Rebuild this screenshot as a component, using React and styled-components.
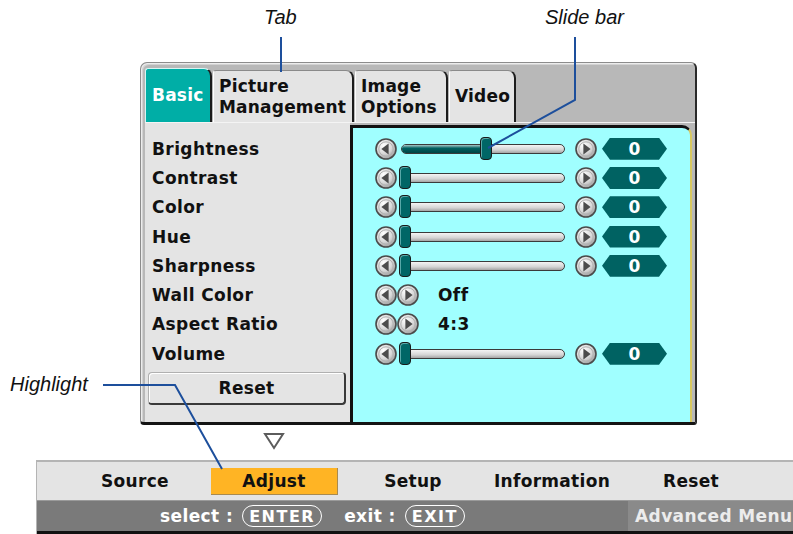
import React from "react";
import styled, { createGlobalStyle } from "styled-components";

const GlobalStyle = createGlobalStyle`
  html, body {
    margin: 0;
    padding: 0;
    background: #ffffff;
  }
  body {
    font-family: "DejaVu Sans", "Liberation Sans", sans-serif;
  }
`;

const tabs = [
  { id: "basic", label: "Basic", width: 67 },
  { id: "picture", label: "Picture\nManagement", width: 141 },
  { id: "image", label: "Image\nOptions", width: 93 },
  { id: "video", label: "Video", width: 67 },
];

const rows = [
  { label: "Brightness", type: "slider", value: 50 },
  { label: "Contrast", type: "slider", value: 0 },
  { label: "Color", type: "slider", value: 0 },
  { label: "Hue", type: "slider", value: 0 },
  { label: "Sharpness", type: "slider", value: 0 },
  { label: "Wall Color", type: "select", text: "Off" },
  { label: "Aspect Ratio", type: "select", text: "4:3" },
  { label: "Volume", type: "slider", value: 0 },
];

const menuItems = ["Source", "Adjust", "Setup", "Information", "Reset"];

const ArrowButton = ({ dir }) => (
  <ArrowSvg width="22" height="22" viewBox="0 0 22 22">
    <defs>
      <radialGradient id={`g-${dir}`} cx="38%" cy="32%" r="75%">
        <stop offset="0%" stopColor="#ffffff" />
        <stop offset="55%" stopColor="#d8d8d8" />
        <stop offset="100%" stopColor="#969696" />
      </radialGradient>
    </defs>
    <circle cx="11" cy="11" r="10" fill={`url(#g-${dir})`} stroke="#4a4a4a" strokeWidth="1.6" />
    <circle cx="11" cy="11" r="7.2" fill="none" stroke="#b0b0b0" strokeWidth="1" />
    {dir === "left" ? (
      <polygon points="6.4,11 13.6,5.6 13.6,16.4" fill="#4c4c4c" />
    ) : (
      <polygon points="15.6,11 8.4,5.6 8.4,16.4" fill="#4c4c4c" />
    )}
  </ArrowSvg>
);

const Slider = ({ value }) => (
  <ControlRow>
    <ArrowButton dir="left" />
    <Track>
      <TrackFill style={{ width: `${(value / 100) * 162}px` }} />
      <Knob style={{ left: `${(value / 100) * 162 - 3}px` }} />
    </Track>
    <RightArrowWrap>
      <ArrowButton dir="right" />
    </RightArrowWrap>
    <ValueBox>0</ValueBox>
  </ControlRow>
);

const Selector = ({ text }) => (
  <ControlRow>
    <ArrowButton dir="left" />
    <ArrowButton dir="right" />
    <SelectText>{text}</SelectText>
  </ControlRow>
);

const App = () => {
  return (
    <Page>
      <GlobalStyle />
      <Window>
        <TabStrip>
          {tabs.map((tab) => (
            <Tab key={tab.id} $active={tab.id === "basic"} $width={tab.width}>
              {tab.label}
            </Tab>
          ))}
        </TabStrip>
        <Body>
          <LeftPanel>
            {rows.map((row) => (
              <Label key={row.label}>{row.label}</Label>
            ))}
            <ResetButton>Reset</ResetButton>
          </LeftPanel>
          <RightPanel>
            {rows.map((row) =>
              row.type === "slider" ? (
                <Slider key={row.label} value={row.value} />
              ) : (
                <Selector key={row.label} text={row.text} />
              )
            )}
          </RightPanel>
        </Body>
      </Window>

      <ArrowArea>
        <svg width="22" height="18" viewBox="0 0 22 18">
          <polygon points="2,2 20,2 11,16" fill="none" stroke="#5c5c5c" strokeWidth="2" />
        </svg>
      </ArrowArea>

      <MenuBar>
        <MenuRow>
          {menuItems.map((item) => (
            <MenuItem key={item} $active={item === "Adjust"}>
              {item}
            </MenuItem>
          ))}
        </MenuRow>
        <StatusRow>
          <StatusLeft>
            select :<Pill>ENTER</Pill>
            <ExitText>exit :</ExitText>
            <Pill>EXIT</Pill>
          </StatusLeft>
          <StatusRight>Advanced Menu</StatusRight>
        </StatusRow>
      </MenuBar>

      <Callouts width="793" height="534" viewBox="0 0 793 534">
        <polyline points="281,37 281,72" fill="none" stroke="#1d4f9c" strokeWidth="2" />
        <polyline points="575,37 575,100 488,148" fill="none" stroke="#1d4f9c" strokeWidth="2" />
        <polyline points="103,385 175,385 222,469" fill="none" stroke="#1d4f9c" strokeWidth="2" />
      </Callouts>
      <CalloutLabel $x={264} $y={6}>Tab</CalloutLabel>
      <CalloutLabel $x={545} $y={6}>Slide bar</CalloutLabel>
      <CalloutLabel $x={10} $y={373}>Highlight</CalloutLabel>
    </Page>
  );
};

export default App;

const Page = styled.div`
  position: relative;
  width: 793px;
  height: 534px;
  overflow: hidden;
  padding-top: 62px;
  box-sizing: border-box;
`;

const Window = styled.div`
  margin-left: 140px;
  width: 557px;
  height: 363px;
  box-sizing: border-box;
  background: #b8b8b8;
  border-top: 1px solid #8c8c8c;
  border-left: 1px solid #8c8c8c;
  border-right: 2px solid #2a2a2a;
  border-bottom: 3px solid #141414;
  border-radius: 7px 6px 3px 4px;
  box-shadow: inset 1px 1px 0 #ececec, inset 2px 2px 0 #d2d2d2;
  padding-left: 4px;
  display: flex;
  flex-direction: column;
`;

const TabStrip = styled.div`
  height: 59px;
  display: flex;
  align-items: flex-end;
  gap: 1px;
  padding-top: 3px;
  box-sizing: border-box;
`;

const Tab = styled.div`
  width: ${({ $width }) => $width}px;
  height: ${({ $active }) => ($active ? 54 : 52)}px;
  box-sizing: border-box;
  display: flex;
  align-items: center;
  padding-left: ${({ $active }) => ($active ? 6 : 5)}px;
  white-space: pre-line;
  font-size: 17px;
  font-weight: bold;
  line-height: 21px;
  color: ${({ $active }) => ($active ? "#ffffff" : "#101010")};
  background: ${({ $active }) => ($active ? "#00aea6" : "#e4e4e4")};
  border-top: 1px solid ${({ $active }) => ($active ? "#d8f4f2" : "#8a8a8a")};
  border-left: 1px solid ${({ $active }) => ($active ? "#d8f4f2" : "#ffffff")};
  border-right: 2px solid #1c1c1c;
  border-radius: 3px 8px 0 0;
  letter-spacing: 0.2px;
`;

const Body = styled.div`
  flex: 1;
  display: flex;
  border-top: 1px solid #f4f4f4;
`;

const LeftPanel = styled.div`
  width: 205px;
  background: #e4e4e4;
  padding: 11px 0 0 7px;
  box-sizing: border-box;
  display: flex;
  flex-direction: column;
`;

const Label = styled.div`
  height: 29.3px;
  display: flex;
  align-items: center;
  font-size: 17px;
  font-weight: bold;
  color: #111111;
  letter-spacing: 0.4px;
`;

const ResetButton = styled.div`
  margin: 4px 0 0 -4px;
  width: 198px;
  height: 33px;
  box-sizing: border-box;
  display: flex;
  align-items: center;
  justify-content: center;
  background: #e4e4e4;
  border-top: 1px solid #b0b0b0;
  border-left: 1px solid #b0b0b0;
  border-right: 2px solid #3a3a3a;
  border-bottom: 2px solid #3a3a3a;
  border-radius: 4px;
  box-shadow: inset 1px 1px 0 #ffffff;
  font-size: 17px;
  font-weight: bold;
  color: #111111;
  letter-spacing: 0.3px;
`;

const RightPanel = styled.div`
  flex: 1;
  margin: 2px 3px 0 0;
  background: #a0ffff;
  border-top: 3px solid #111111;
  border-left: 3px solid #111111;
  border-right: 2px solid #d8c860;
  border-top-right-radius: 10px;
  padding: 6px 0 0 22px;
  box-sizing: border-box;
  display: flex;
  flex-direction: column;
`;

const ControlRow = styled.div`
  height: 29.3px;
  display: flex;
  align-items: center;
`;

const ArrowSvg = styled.svg`
  display: block;
  flex: none;
`;

const Track = styled.div`
  position: relative;
  margin-left: 4px;
  width: 164px;
  height: 10px;
  box-sizing: border-box;
  border: 1.5px solid #3a3a3a;
  border-radius: 5px;
  background: linear-gradient(#f4f4f4, #d4d4d4 60%, #a4a4a4);
`;

const TrackFill = styled.div`
  height: 100%;
  border-radius: 4px 0 0 4px;
  background: linear-gradient(#a8c8c8, #006060 40%, #004444);
`;

const Knob = styled.div`
  position: absolute;
  top: -8px;
  width: 12px;
  height: 23px;
  box-sizing: border-box;
  background: #006666;
  border: 1.5px solid #1a1a1a;
  border-radius: 4px;
  box-shadow: inset 1px 1px 0 #58a8a8;
`;

const RightArrowWrap = styled.div`
  margin-left: 10px;
`;

const ValueBox = styled.div`
  margin-left: 5px;
  width: 65px;
  height: 22px;
  display: flex;
  align-items: center;
  justify-content: center;
  background: #006262;
  clip-path: polygon(8px 0, calc(100% - 8px) 0, 100% 50%, calc(100% - 8px) 100%, 8px 100%, 0 50%);
  color: #ffffff;
  font-size: 17px;
  font-weight: bold;
`;

const SelectText = styled.div`
  margin-left: 19px;
  font-size: 17px;
  font-weight: bold;
  color: #111111;
  letter-spacing: 0.4px;
`;

const ArrowArea = styled.div`
  height: 35px;
  padding: 7px 0 0 263px;
  box-sizing: border-box;
`;

const MenuBar = styled.div`
  margin-left: 36px;
  background: #e4e4e4;
  border-top: 2px solid #b4b4b4;
  border-left: 1px solid #b4b4b4;
`;

const MenuRow = styled.div`
  height: 38px;
  display: flex;
  align-items: center;
  gap: 12px;
  padding-left: 35px;
`;

const MenuItem = styled.div`
  width: 127px;
  height: 27px;
  flex: none;
  box-sizing: border-box;
  display: flex;
  align-items: center;
  justify-content: center;
  font-size: 17px;
  font-weight: bold;
  color: #111111;
  letter-spacing: 0.3px;
  background: ${({ $active }) => ($active ? "#ffb424" : "transparent")};
  border-right: 1px solid ${({ $active }) => ($active ? "#a88a50" : "transparent")};
  border-bottom: 1px solid ${({ $active }) => ($active ? "#a88a50" : "transparent")};
`;

const StatusRow = styled.div`
  height: 30px;
  display: flex;
  background: #7a7a7a;
  border-top: 1px solid #9a9a9a;
  border-bottom: 3px solid #111111;
  color: #ffffff;
  font-size: 17px;
  font-weight: bold;
  letter-spacing: 0.4px;
`;

const StatusLeft = styled.div`
  flex: 1;
  display: flex;
  align-items: center;
  padding-left: 123px;
  white-space: pre;
`;

const Pill = styled.span`
  margin-left: 9px;
  height: 20px;
  padding: 0 6px;
  display: inline-flex;
  align-items: center;
  border: 1.5px solid #ffffff;
  border-radius: 11px;
  font-size: 16px;
  letter-spacing: 1.5px;
`;

const ExitText = styled.span`
  margin-left: 22px;
`;

const StatusRight = styled.div`
  width: 165px;
  display: flex;
  align-items: center;
  padding-left: 7px;
  box-sizing: border-box;
  background: #8a8a8a;
  color: #ececec;
  white-space: nowrap;
  font-size: 17px;
  letter-spacing: 0.4px;
`;

const Callouts = styled.svg`
  position: absolute;
  left: 0;
  top: 0;
  pointer-events: none;
`;

const CalloutLabel = styled.div`
  position: absolute;
  left: ${({ $x }) => $x}px;
  top: ${({ $y }) => $y}px;
  font-family: "Liberation Sans", Arial, sans-serif;
  font-style: italic;
  font-size: 20px;
  color: #111111;
`;
